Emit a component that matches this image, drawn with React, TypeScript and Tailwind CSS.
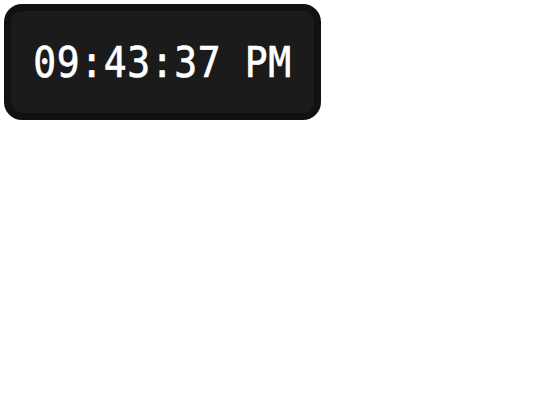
export default function App() {
  return (
    <div className="min-h-screen bg-white">
      <div className="inline-flex m-1 w-[317px] h-[116px] items-center justify-center rounded-[18px] border-[7px] border-[#111111] bg-[#1b1b1b]">
        <span
          className="inline-block text-white text-[38px] leading-none font-normal scale-y-[1.14] tracking-[0.6px] [-webkit-text-stroke:0.6px_white]"
          style={{ fontFamily: '"DejaVu Sans Mono", monospace' }}
        >
          09:43:37 PM
        </span>
      </div>
    </div>
  );
}
